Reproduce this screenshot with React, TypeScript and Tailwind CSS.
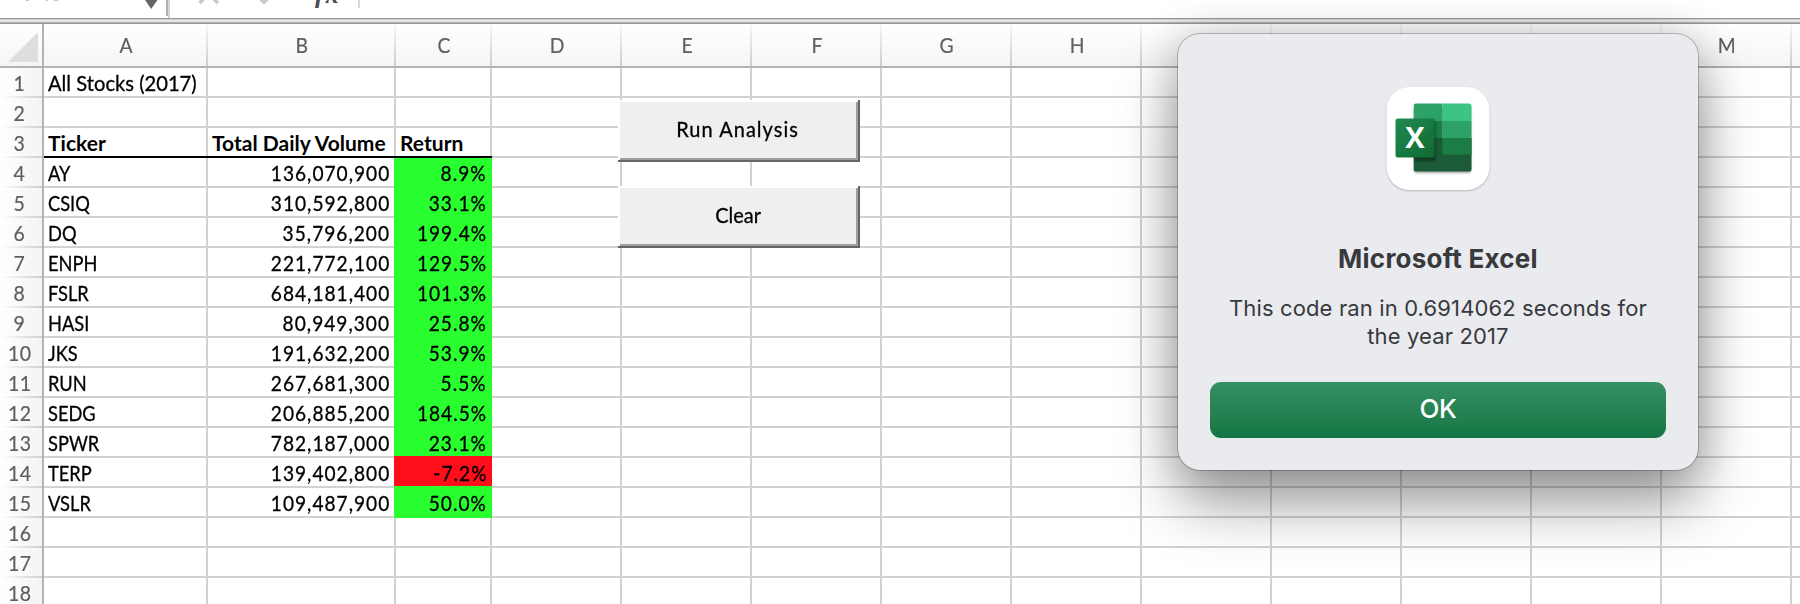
import React from "react";

const COLS = ["A", "B", "C", "D", "E", "F", "G", "H", "I", "J", "K", "L", "M", ""];
const WIDTHS = [
  "w-[164px]", "w-[188px]", "w-[96px]", "w-[130px]", "w-[130px]", "w-[130px]", "w-[130px]",
  "w-[130px]", "w-[130px]", "w-[130px]", "w-[130px]", "w-[130px]", "w-[130px]", "w-[130px]",
];

type Row = { cells: string[]; kind?: "head" | "data" };
const ROWS: Row[] = [
  { cells: ["All Stocks (2017)"] },
  { cells: [] },
  { cells: ["Ticker", "Total Daily Volume", "Return"], kind: "head" },
  { cells: ["AY", "136,070,900", "8.9%"], kind: "data" },
  { cells: ["CSIQ", "310,592,800", "33.1%"], kind: "data" },
  { cells: ["DQ", "35,796,200", "199.4%"], kind: "data" },
  { cells: ["ENPH", "221,772,100", "129.5%"], kind: "data" },
  { cells: ["FSLR", "684,181,400", "101.3%"], kind: "data" },
  { cells: ["HASI", "80,949,300", "25.8%"], kind: "data" },
  { cells: ["JKS", "191,632,200", "53.9%"], kind: "data" },
  { cells: ["RUN", "267,681,300", "5.5%"], kind: "data" },
  { cells: ["SEDG", "206,885,200", "184.5%"], kind: "data" },
  { cells: ["SPWR", "782,187,000", "23.1%"], kind: "data" },
  { cells: ["TERP", "139,402,800", "-7.2%"], kind: "data" },
  { cells: ["VSLR", "109,487,900", "50.0%"], kind: "data" },
  { cells: [] },
  { cells: [] },
  { cells: [] },
];

const NUMERIC = "origin-right scale-x-[0.91] tracking-[1.100px] -mr-[1px]";

function FormulaBar() {
  return (
    <div className="h-6 w-full shrink-0 bg-white">
      <svg width="1800" height="24" viewBox="0 0 1800 24">
        <path d="M26 0.500h3M46 0.500h2M54 0.500h4" stroke="#c4c4c4" strokeWidth="1" />
        <path d="M145 0H157.500L151.200 9Z" fill="#666" />
        <rect x="166" y="0" width="2" height="16" fill="#b0b0b0" />
        <rect x="168" y="0" width="2" height="18" fill="#d6d6d6" />
        <path d="M199.500 3L205 -2.500M218 3L212.500 -2.500" stroke="#c9c9c9" strokeWidth="3.600" />
        <path d="M259.500 -2L264 2L268.500 -2" stroke="#c9c9c9" strokeWidth="3.600" fill="none" />
        <text x="315" y="2.500" fontFamily="Liberation Serif, serif" fontStyle="italic" fontWeight="700" fontSize="26" letterSpacing="2" fill="#4a4a4a">fx</text>
        <rect x="358" y="0" width="2" height="8" fill="#d9d9d9" />
        <rect x="0" y="18" width="1800" height="1" fill="#989898" />
        <rect x="0" y="19" width="1800" height="1" fill="#d2d2d2" />
        <rect x="0" y="20" width="1800" height="2" fill="#e6e4e6" />
        <rect x="0" y="22" width="1800" height="1" fill="#b0aeb0" />
        <rect x="0" y="23" width="1800" height="1" fill="#989898" />
      </svg>
    </div>
  );
}

function HeaderRow() {
  return (
    <div className="flex h-11 shrink-0 border-b-2 border-[#b3b3b3] bg-gradient-to-b from-white to-[#f5f5f5]">
      <div className="flex w-11 shrink-0 border-r-2 border-[#b3b3b3]">
        <svg width="42" height="42" viewBox="0 0 42 42">
          <path d="M38 8V38H8Z" fill="#dedede" />
        </svg>
      </div>
      {COLS.map((c, i) => (
        <div key={i} className={`flex shrink-0 ${WIDTHS[i]}`}>
          <div className="flex flex-1 items-center justify-center pb-px pl-0.5 text-[21px] leading-none text-[#5f5f5f]">
            <span className="scale-x-[0.92] [-webkit-text-stroke:0.2px]">{c}</span>
          </div>
          <div className="w-0.5 bg-gradient-to-b from-[#f8f8f8] to-[#cdcdcd]" />
        </div>
      ))}
    </div>
  );
}

function Cell({ row, r, c }: { row: Row; r: number; c: number }) {
  const text = row.cells[c] ?? "";
  const data = row.kind === "data";
  if (data && c === 2) {
    const fill = text.startsWith("-") ? "bg-[#ff0d1b]" : "bg-[#29ff2f]";
    const place = r === 3 ? "h-[30px]" : "-mt-0.5 h-8";
    return (
      <div className={`relative -ml-0.5 flex w-[98px] shrink-0 items-end justify-end pr-[6px] pb-[5px] leading-[21px] ${fill} ${place}`}>
        <span className={`${NUMERIC} [-webkit-text-stroke:0.3px]`}>{text}</span>
      </div>
    );
  }
  const head = row.kind === "head" && c < 3;
  const line = head ? "border-b-black" : "border-b-[#d2d2d2]";
  const align = data && c === 1 ? "justify-end pr-[5px]" : "pl-1";
  const glyphs = head
    ? "font-bold tracking-[0.020px]"
    : data && c === 1
      ? `${NUMERIC} [-webkit-text-stroke:0.3px]`
      : data
        ? "origin-left scale-x-[0.87] [-webkit-text-stroke:0.3px]"
        : "origin-left scale-x-[0.960] [-webkit-text-stroke:0.3px]";
  return (
    <div className={`flex h-[30px] shrink-0 border-b-2 whitespace-nowrap ${WIDTHS[c]} ${line}`}>
      <div className={`flex flex-1 items-center border-r-2 border-r-[#d2d2d2] ${align}`}>
        <span className={glyphs}>{text}</span>
      </div>
    </div>
  );
}

function MacroButton({ label, place, glyphs }: { label: string; place: string; glyphs: string }) {
  return (
    <button className={`absolute left-[618px] h-[62px] w-[242px] border-r-2 border-b-2 border-[#666] bg-white pt-0.5 pl-0.5 ${place}`}>
      <span className="flex h-full w-full items-center justify-center border-r-2 border-b-2 border-[#9f9f9f] bg-[#efefef] pb-[3px] text-[21px] leading-none">
        <span className={`[-webkit-text-stroke:0.3px] ${glyphs}`}>{label}</span>
      </span>
    </button>
  );
}

function ExcelIcon() {
  return (
    <svg width="103" height="103" viewBox="0 0 103 103" className="shrink-0 -translate-x-[0.5px] overflow-visible">
      <defs>
        <linearGradient id="tile" x1="0" y1="0" x2="1" y2="1">
          <stop offset="0" stopColor="#1f8b52" />
          <stop offset="1" stopColor="#0e6a31" />
        </linearGradient>
        <clipPath id="sheet"><rect x="27" y="16.500" width="58" height="68" rx="2.500" /></clipPath>
        <filter id="soft" x="-30%" y="-30%" width="160%" height="160%"><feGaussianBlur stdDeviation="1.300" /></filter>
      </defs>
      <rect x="0" y="1.500" width="103" height="102.500" rx="23" fill="#000" opacity="0.220" filter="url(#soft)" />
      <rect x="0" y="0" width="103" height="103" rx="23" fill="#fff" />
      <rect x="27.500" y="20" width="57" height="66" rx="2.500" fill="#000" opacity="0.350" filter="url(#soft)" />
      <g clipPath="url(#sheet)">
        <rect x="27" y="16" width="29" height="18" fill="#2ca267" />
        <rect x="56" y="16" width="30" height="18" fill="#3dc384" />
        <rect x="27" y="34" width="29" height="17" fill="#1b7c45" />
        <rect x="56" y="34" width="30" height="17" fill="#2ca267" />
        <rect x="27" y="51" width="59" height="34" fill="#1c5b38" />
        <rect x="56" y="51" width="30" height="16.500" fill="#1b7c45" />
        <rect x="27" y="33" width="22" height="41" fill="#000" opacity="0.350" filter="url(#soft)" />
      </g>
      <rect x="9" y="31.500" width="39" height="39" rx="2.500" fill="url(#tile)" />
      <text x="28.300" y="61.300" textAnchor="middle" fontFamily="Open Sans, sans-serif" fontWeight="700" fontSize="29" fill="#fff">X</text>
    </svg>
  );
}

function Dialog() {
  return (
    <div className="absolute top-[34px] left-[1178px] flex h-[436px] w-[520px] flex-col items-center rounded-[22px] bg-[#e9ebef] px-8 pt-[53px] font-['Inter',sans-serif] text-[#38393d] shadow-[0_0_0_1px_rgba(0,0,0,0.22),0_34px_60px_rgba(0,0,0,0.38),0_0_44px_rgba(0,0,0,0.18)]">
      <ExcelIcon />
      <h1 className="mt-[53px] text-[26px] leading-8 font-bold tracking-[0.240px]">Microsoft Excel</h1>
      <p className="mt-[19px] text-center text-[22px] leading-7 tracking-[0.130px] whitespace-nowrap">
        This code ran in 0.6914062 seconds for
        <br />
        the year 2017
      </p>
      <button className="mt-8 h-14 w-[456px] shrink-0 rounded-[11px] bg-gradient-to-b from-[#358f64] to-[#147645] pb-0.5 text-[26px] leading-none font-medium tracking-[-0.300px] text-white">OK</button>
    </div>
  );
}

export default function App() {
  return (
    <div className="relative flex h-[604px] w-[1800px] flex-col overflow-hidden bg-white font-['Lato',sans-serif] text-[21px] leading-none text-black">
      <FormulaBar />
      <HeaderRow />
      {ROWS.map((row, r) => (
        <div key={r} className="flex h-[30px] shrink-0">
          <div className="flex w-11 shrink-0 border-r-2 border-[#b3b3b3] bg-gradient-to-r from-white to-[#f4f4f4]">
            <div className="flex flex-1 flex-col">
              <div className="flex h-7 items-center justify-center pr-[3px] text-[#5f5f5f]">
                <span className="scale-x-[0.93] tracking-[0.600px] [-webkit-text-stroke:0.2px]">{r + 1}</span>
              </div>
              <div className="h-0.5 bg-gradient-to-r from-white to-[#cfcfcf]" />
            </div>
          </div>
          {COLS.map((_, c) => (
            <Cell key={c} row={row} r={r} c={c} />
          ))}
        </div>
      ))}
      <MacroButton label="Run Analysis" place="top-[100px]" glyphs="scale-x-[0.950] tracking-[1.100px]" />
      <MacroButton label="Clear" place="top-[186px]" glyphs="scale-x-[0.950]" />
      <Dialog />
    </div>
  );
}
